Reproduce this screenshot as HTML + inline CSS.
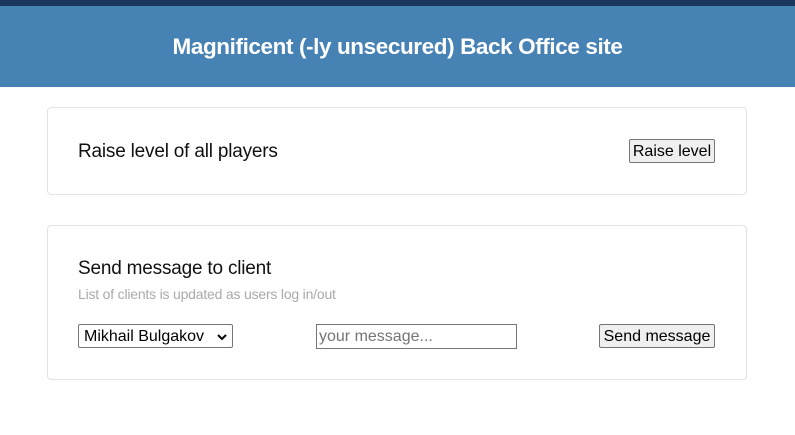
<!DOCTYPE html>
<html><head><style>
body{margin:0;width:795px;height:435px;background:#fff;font-family:"Liberation Sans",sans-serif;position:relative;overflow:hidden}
.top{position:absolute;left:0;top:0;width:795px;height:6px;background:#1b365d}
.hdr{position:absolute;left:0;top:6px;width:795px;height:81px;background:#4682b4;color:#fff;font-weight:bold;font-size:22.5px;text-align:center;line-height:81px;letter-spacing:-0.4px}
.card{position:absolute;left:47px;width:700px;border:1px solid #e3e3e3;border-radius:4px;box-sizing:border-box}
.t{position:absolute;left:78px;font-size:19px;color:#111;letter-spacing:-0.2px}
.s{position:absolute;left:78px;font-size:14px;color:#aaa;letter-spacing:-0.2px}
.ctl{position:absolute;box-sizing:border-box;font-family:"Liberation Sans",sans-serif;font-size:16px;border:1px solid #767676;background:#fff;color:#000;padding:0 2px;line-height:22px}
.btn{background:#efefef;border-radius:2px;text-align:center}
</style></head><body>
<div class="top"></div>
<div class="hdr">Magnificent (-ly unsecured) Back Office site</div>
<div class="card" style="top:107px;height:88px"></div>
<div class="t" style="top:141px">Raise level of all players</div>
<div class="ctl btn" style="left:629px;top:139px;width:86px;height:24px;line-height:23px">Raise level</div>
<div class="card" style="top:225px;height:155px"></div>
<div class="t" style="top:258px">Send message to client</div>
<div class="s" style="top:286px">List of clients is updated as users log in/out</div>
<div class="ctl" style="left:78px;top:324px;width:155px;height:24px;border-radius:2px;padding-left:5px;line-height:23px">Mikhail Bulgakov<svg width="12" height="10" style="position:absolute;right:4px;top:8px"><path d="M2 2 L6 6 L10 2" stroke="#000" stroke-width="2" fill="none"/></svg></div>
<div class="ctl" style="left:316px;top:324px;width:201px;height:25px;color:#757575;line-height:23px">your message...</div>
<div class="ctl btn" style="left:599px;top:324px;width:116px;height:24px;line-height:23px">Send message</div>
</body></html>
